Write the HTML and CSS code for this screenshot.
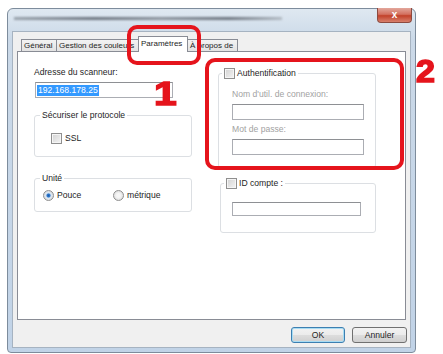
FILE: index.html
```html
<!DOCTYPE html>
<html>
<head>
    <title>Paramètres</title>
    <link rel="stylesheet" href="styles.css">
</head>
<body>
    <div class="window">
        <div class="title-text"></div>
        <div class="close-btn">x</div>

        <div class="client">
            <div class="tabs">
                <div class="tab tab-general">Général</div>
                <div class="tab tab-colors">Gestion des couleurs</div>
                <div class="tab tab-params active">Paramètres</div>
                <div class="tab tab-about">À propos de</div>
            </div>

            <div class="panel">
                <div class="col col-left">
                    <div class="field-label">Adresse du scanneur:</div>
                    <div class="textbox textbox-ip"><span class="selected">192.168.178.25</span></div>

                    <div class="group group-secure">
                        <div class="group-title">Sécuriser le protocole</div>
                        <div class="option option-ssl">
                            <span class="checkbox"></span>
                            <span>SSL</span>
                        </div>
                    </div>

                    <div class="group group-unit">
                        <div class="group-title">Unité</div>
                        <div class="radios">
                            <div class="option option-pouce">
                                <span class="radio checked"></span>
                                <span>Pouce</span>
                            </div>
                            <div class="option">
                                <span class="radio"></span>
                                <span>métrique</span>
                            </div>
                        </div>
                    </div>
                </div>

                <div class="col col-right">
                    <div class="group group-auth">
                        <div class="group-title check-title">
                            <span class="checkbox"></span>
                            <span>Authentification</span>
                        </div>
                        <div class="field-label disabled">Nom d'util. de connexion:</div>
                        <div class="textbox textbox-wide"></div>
                        <div class="field-label disabled label-pass">Mot de passe:</div>
                        <div class="textbox textbox-wide"></div>
                    </div>

                    <div class="group group-account">
                        <div class="group-title check-title">
                            <span class="checkbox"></span>
                            <span>ID compte :</span>
                        </div>
                        <div class="textbox textbox-account"></div>
                    </div>
                </div>
            </div>

            <div class="buttons">
                <div class="btn btn-default">OK</div>
                <div class="btn">Annuler</div>
            </div>
        </div>
    </div>

    <!-- annotations drawn over the dialog -->
    <div class="mark mark-tab"></div>
    <div class="mark mark-auth"></div>
    <div class="step step-1">1</div>
    <div class="step step-2">2</div>
</body>
</html>
```

FILE: styles.css
```css
body {
    margin: 0;
    padding: 8px 0 0 7px;
    background: #ffffff;
    font-family: "Liberation Sans", Arial, sans-serif;
    font-size: 8.6px;
    color: #1e1e1e;
    position: relative;
    width: 443px;
    height: 354px;
    box-sizing: border-box;
    overflow: hidden;
}

.window {
    position: relative;
    width: 409px;
    height: 345px;
    box-sizing: border-box;
    border: 1px solid #7d8c9c;
    border-radius: 6px 6px 4px 4px;
    background: linear-gradient(to bottom, #dfe8f1 0, #cbd9e8 30px, #c1d3e7 100%);
    padding: 22px 4px 4px 4px;
    display: flex;
}

.title-text {
    position: absolute;
    left: 6px;
    top: 8px;
    width: 268px;
    height: 3px;
    background: linear-gradient(to right, #9aa3ad, #6f7782 30%, #8d959f 55%, #6f7782 80%, #b3bbc4);
    filter: blur(1px);
}

.close-btn {
    position: absolute;
    right: 3px;
    top: -1px;
    width: 35px;
    height: 15px;
    box-sizing: border-box;
    border: 1px solid #8d4a3f;
    border-top: none;
    border-radius: 0 0 4px 4px;
    background: linear-gradient(to bottom, #e3a79c 0, #d3705f 45%, #c2412a 55%, #d8806c 100%);
    color: #ffffff;
    font-weight: bold;
    font-size: 10px;
    text-align: center;
    line-height: 13px;
}

.client {
    flex: 1;
    display: flex;
    flex-direction: column;
    background: #f0f0f0;
    border: 1px solid #a6b3c1;
    padding: 7px 4px 0 4px;
}

.tabs {
    display: flex;
    align-items: flex-end;
    height: 12px;
    padding-left: 4px;
}

.tab {
    height: 12px;
    box-sizing: border-box;
    border: 1px solid #898c95;
    border-bottom: none;
    background: linear-gradient(to bottom, #f3f3f3, #e3e3e3);
    font-size: 8px;
    line-height: 11px;
    padding: 0 2px;
    margin-right: -1px;
    white-space: nowrap;
    overflow: hidden;
}

.tab-general { width: 36px; }
.tab-colors { width: 83px; }
.tab-params { width: 50px; }
.tab-about { width: 51px; }

.tab.active {
    height: 16px;
    margin-bottom: -1px;
    background: #ffffff;
    line-height: 13px;
    position: relative;
    z-index: 1;
}

.panel {
    height: 269px;
    box-sizing: border-box;
    border: 1px solid #898c95;
    background: #ffffff;
    display: flex;
    gap: 26px;
    padding: 15px 0 0 16px;
}

.col {
    width: 158px;
    display: flex;
    flex-direction: column;
}

.field-label {
    line-height: 11px;
}

.field-label.disabled {
    color: #a2a2a2;
}

.textbox {
    height: 16px;
    box-sizing: border-box;
    border: 1px solid #abadb3;
    border-top-color: #8e9094;
    background: #ffffff;
}

.textbox-ip {
    width: 138px;
    margin: 4px 0 0 1px;
    padding: 2px 0 0 1px;
}

.selected {
    background: #3399ff;
    color: #ffffff;
    line-height: 11px;
    display: inline-block;
    padding: 0 1px;
}

.group {
    position: relative;
    border: 1px solid #dcdfe3;
    border-radius: 3px;
    box-sizing: border-box;
}

.group-title {
    position: absolute;
    top: -6px;
    left: 5px;
    background: #ffffff;
    padding: 0 2px;
    line-height: 11px;
    display: flex;
    align-items: center;
    gap: 2px;
}

.group-secure {
    height: 42px;
    margin-top: 17px;
    padding: 17px 0 0 16px;
}

.group-unit {
    height: 34px;
    margin-top: 21px;
    padding: 11px 0 0 8px;
}

.option {
    display: flex;
    align-items: center;
    gap: 3px;
    line-height: 11px;
}

.radios {
    display: flex;
}

.option-pouce {
    width: 70px;
}

.checkbox {
    width: 11px;
    height: 11px;
    box-sizing: border-box;
    border: 1px solid #8f8f8f;
    background: linear-gradient(135deg, #d2d2d2, #f4f4f4);
    box-shadow: inset 0 0 0 1px #f5f5f5;
}

.radio {
    width: 11px;
    height: 11px;
    box-sizing: border-box;
    border: 1px solid #8f8f8f;
    border-radius: 50%;
    background: radial-gradient(circle, #f6f6f6 30%, #d2d2d2 100%);
}

.radio.checked {
    background: radial-gradient(circle, #1d5aa6 0, #2f7bd0 25%, #dfe8f2 40%, #d2d2d2 100%);
}

.check-title {
    left: 3px;
    top: -6px;
    color: #1e1e1e;
}

.col-right {
    padding-top: 6px;
}

.group-auth {
    height: 95px;
    padding: 15px 0 0 13px;
}

.textbox-wide {
    width: 132px;
    margin-top: 4px;
}

.label-pass {
    margin-top: 4px;
}

.group-account {
    height: 50px;
    margin-top: 15px;
    margin-left: 2px;
    padding: 18px 0 0 11px;
}

.textbox-account {
    width: 129px;
    height: 14px;
}

.buttons {
    display: flex;
    justify-content: flex-end;
    gap: 7px;
    padding: 7px 0 0 0;
    margin-right: -1px;
}

.btn {
    width: 55px;
    height: 16px;
    box-sizing: border-box;
    border: 1px solid #707070;
    border-radius: 3px;
    background: linear-gradient(to bottom, #f2f2f2 0, #ebebeb 50%, #dddddd 51%, #cfcfcf 100%);
    text-align: center;
    line-height: 14px;
}

.btn-default {
    width: 54px;
    border-color: #3c7fb1;
    box-shadow: inset 0 0 0 1px #a8dcf3;
}

.mark {
    position: absolute;
    border: 4px solid #e5141c;
    border-radius: 10px;
    box-sizing: border-box;
}

.mark-tab {
    left: 127px;
    top: 25px;
    width: 74px;
    height: 40px;
}

.mark-auth {
    left: 205px;
    top: 58px;
    width: 199px;
    height: 112px;
}

.step {
    position: absolute;
    font-family: "Liberation Sans", Arial, sans-serif;
    font-weight: bold;
    color: #e5141c;
    -webkit-text-stroke: 1.5px #e5141c;
    line-height: 1;
}

.step-1 {
    left: 154px;
    top: 76px;
    font-size: 34px;
    transform: scaleX(1.2);
    transform-origin: left top;
}

.step-2 {
    left: 416px;
    top: 56px;
    font-size: 31px;
    transform: scaleX(1.1);
    transform-origin: left top;
}
```
